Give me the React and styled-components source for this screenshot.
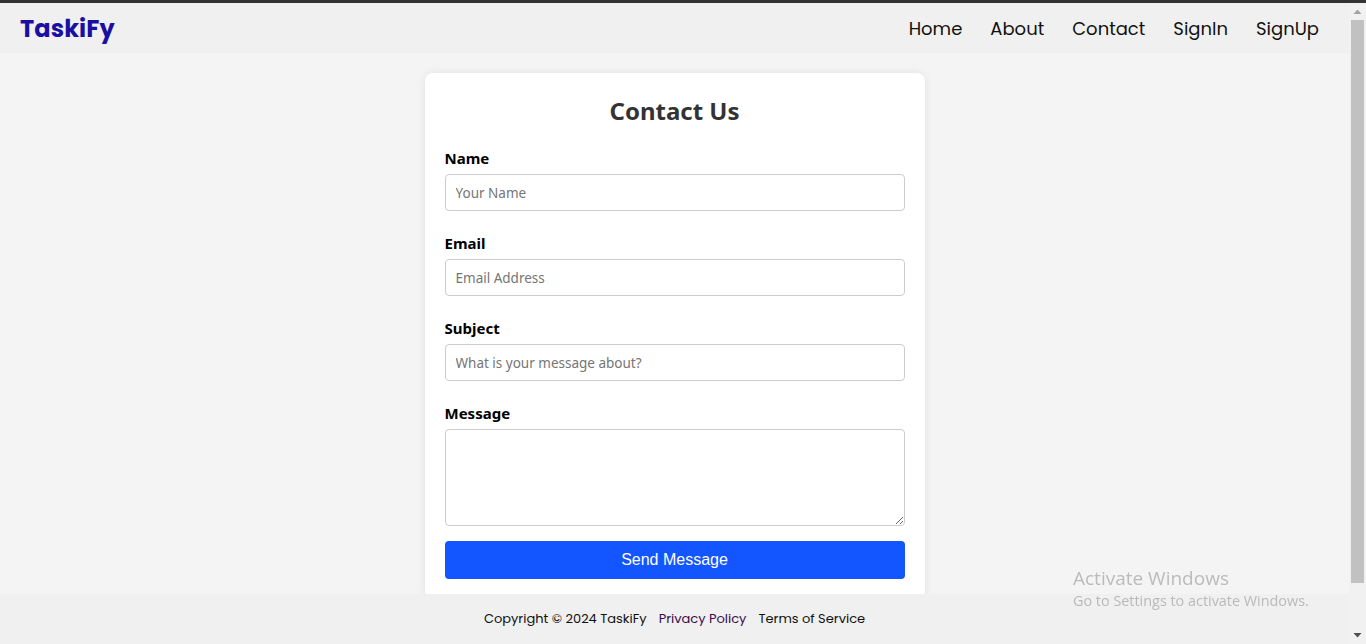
import styled, { createGlobalStyle } from "styled-components";

const GlobalStyle = createGlobalStyle`
  html, body {
    margin: 0;
    padding: 0;
    overflow: hidden;
  }
  body {
    background: #f4f4f4;
    border-top: 3px solid #333;
    font-family: "Poppins", "Inter", sans-serif;
  }
  * {
    box-sizing: border-box;
  }
`;

const fields = [
  { id: "name", label: "Name", placeholder: "Your Name" },
  { id: "email", label: "Email", placeholder: "Email Address" },
  { id: "subject", label: "Subject", placeholder: "What is your message about?" },
];

export default function App() {
  return (
    <>
      <GlobalStyle />
      <Window>
        <Page>
          <Header>
            <Logo>TaskiFy</Logo>
            <Nav>
              <NavLink href="#">Home</NavLink>
              <NavLink href="#">About</NavLink>
              <NavLink href="#">Contact</NavLink>
              <NavLink href="#">SignIn</NavLink>
              <NavLink href="#">SignUp</NavLink>
            </Nav>
          </Header>
          <Main>
            <Card>
              <Title>Contact Us</Title>
              <form onSubmit={(e) => e.preventDefault()}>
                {fields.map((f) => (
                  <Field key={f.id}>
                    <Label htmlFor={f.id}>{f.label}</Label>
                    <Input id={f.id} placeholder={f.placeholder} />
                  </Field>
                ))}
                <Field>
                  <Label htmlFor="message">Message</Label>
                  <TextArea id="message" />
                </Field>
                <SendButton type="submit">Send Message</SendButton>
              </form>
            </Card>
          </Main>
          <Footer>
            <span>Copyright © 2024 TaskiFy</span>
            <FooterLink href="#" $visited>Privacy Policy</FooterLink>
            <FooterLink href="#">Terms of Service</FooterLink>
          </Footer>
        </Page>
        <ScrollTrack>
          <Arrow viewBox="0 0 17 17">
            <polygon points="4.5,11 12.5,11 8.5,6.5" fill="#a3a3a3" />
          </Arrow>
          <ThumbArea>
            <Thumb />
          </ThumbArea>
          <Arrow viewBox="0 0 17 17">
            <polygon points="4.5,6 12.5,6 8.5,10.5" fill="#505050" />
          </Arrow>
        </ScrollTrack>
      </Window>
      <Watermark>
        <WatermarkTitle>Activate Windows</WatermarkTitle>
        <WatermarkText>Go to Settings to activate Windows.</WatermarkText>
      </Watermark>
    </>
  );
}

const Window = styled.div`
  display: flex;
  height: calc(100vh - 3px);
`;

const Page = styled.div`
  flex: 1;
  min-width: 0;
  display: flex;
  flex-direction: column;
`;

const Header = styled.header`
  flex: 0 0 50px;
  background: #f0f0f0;
  display: flex;
  align-items: center;
  justify-content: space-between;
  padding: 0 30px 0 20px;
`;

const Logo = styled.div`
  color: #1a0fa3;
  font-size: 24px;
  font-weight: 700;
  letter-spacing: 0.1px;
`;

const Nav = styled.nav`
  display: flex;
  gap: 28px;
`;

const NavLink = styled.a`
  color: #111;
  text-decoration: none;
  font-size: 18px;
`;

const Main = styled.main`
  flex: 1;
  overflow: hidden;
  padding-top: 20px;
`;

const Card = styled.div`
  width: 500px;
  margin: 0 auto;
  background: #fff;
  border-radius: 8px;
  box-shadow: 0 0 10px rgba(0, 0, 0, 0.08);
  padding: 20px;
  font-family: "Comic Sans MS", "Noto Sans", sans-serif;
`;

const Title = styled.h2`
  margin: 0 0 18px;
  height: 36px;
  line-height: 36px;
  text-align: center;
  font-size: 24px;
  font-weight: 700;
  color: #333;
`;

const Field = styled.div`
  margin-bottom: 21px;

  &:last-of-type {
    margin-bottom: 15px;
  }
`;

const Label = styled.label`
  display: block;
  font-size: 15px;
  font-weight: 700;
  line-height: 22px;
  margin-bottom: 5px;
  color: #000;
`;

const Input = styled.input`
  display: block;
  width: 100%;
  height: 37px;
  padding: 0 10px;
  border: 1px solid #ccc;
  border-radius: 4px;
  font-family: inherit;
  font-size: 13.5px;
  outline: none;

  &::placeholder {
    color: #757575;
  }
`;

const TextArea = styled.textarea`
  display: block;
  width: 100%;
  height: 97px;
  padding: 10px;
  border: 1px solid #ccc;
  border-radius: 4px;
  font-family: inherit;
  font-size: 14px;
  outline: none;
`;

const SendButton = styled.button`
  display: block;
  width: 100%;
  height: 38px;
  border: none;
  border-radius: 4px;
  background: #1355ff;
  color: #fff;
  font-family: "Liberation Sans", Arial, sans-serif;
  font-size: 16px;
  cursor: pointer;
`;

const Footer = styled.footer`
  flex: 0 0 50px;
  background: #f0f0f0;
  display: flex;
  align-items: center;
  justify-content: center;
  gap: 12px;
  font-size: 13px;
  color: #111;
`;

const FooterLink = styled.a`
  color: ${({ $visited }) => ($visited ? "#3a0c4a" : "#111")};
  text-decoration: none;
`;

const ScrollTrack = styled.div`
  flex: 0 0 17px;
  background: #f1f1f1;
  display: flex;
  flex-direction: column;
`;

const Arrow = styled.svg`
  display: block;
  width: 17px;
  height: 17px;
  flex: 0 0 17px;
`;

const ThumbArea = styled.div`
  flex: 1;
  padding: 0 2px 44px;
`;

const Thumb = styled.div`
  height: 100%;
  background: #c1c1c1;
`;

const Watermark = styled.div`
  position: fixed;
  left: 1073px;
  top: 565px;
  font-family: "Open Sans", "Noto Sans", sans-serif;
  color: rgba(140, 140, 140, 0.55);
  pointer-events: none;
`;

const WatermarkTitle = styled.div`
  font-size: 19px;
  line-height: 26px;
`;

const WatermarkText = styled.div`
  font-size: 14.4px;
  line-height: 20px;
`;
